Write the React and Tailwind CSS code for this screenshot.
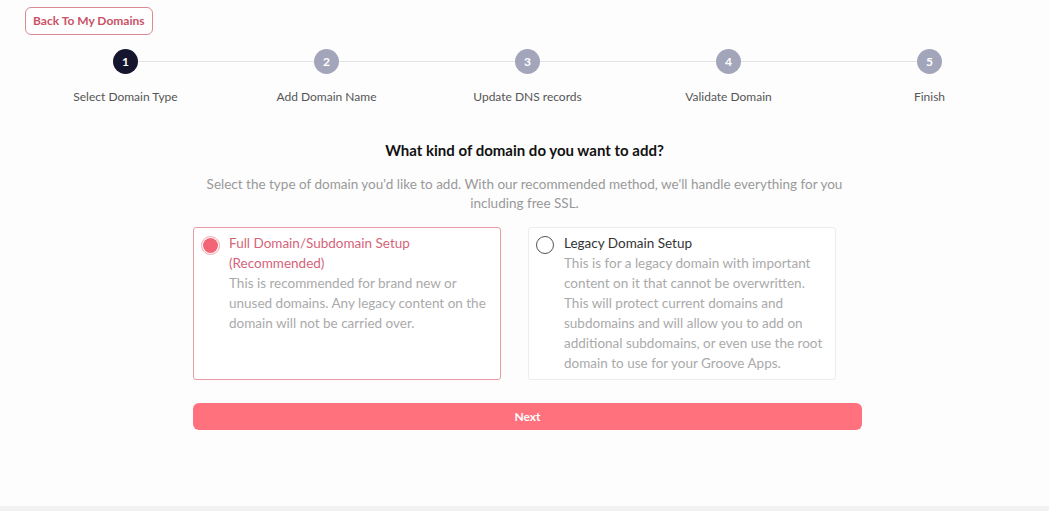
export default function App() {
  const steps = ["Select Domain Type", "Add Domain Name", "Update DNS records", "Validate Domain", "Finish"];
  return (
    <div className="w-[1049px] h-[511px] bg-[#fdfdfd] flex flex-col overflow-hidden" style={{ fontFamily: "Lato, 'Noto Sans', sans-serif" }}>
      <div className="flex-1 flex flex-col">
        <div className="pl-[25px] pt-[7px]">
          <button className="h-[28px] px-[7px] border border-[#d98a93] rounded-[6px] text-[12px] font-bold text-[#c95267] bg-white">
            Back To My Domains
          </button>
        </div>
        <div className="ml-[25px] w-[1005px] mt-[14px] grid grid-cols-5">
          {steps.map((s, i) => (
            <div key={s} className="flex flex-col items-center relative">
              {i < 4 && <div className="absolute top-[12px] left-1/2 w-full h-px bg-[#e3e3e6]" />}
              <div className={`relative z-10 w-[25px] h-[25px] rounded-full flex items-center justify-center text-[12px] font-bold text-white ${i === 0 ? "bg-[#15152e]" : "bg-[#a3a6ba]"}`}>
                {i + 1}
              </div>
              <div className="mt-[16px] text-[12px] text-[#555] leading-[14px]">{s}</div>
            </div>
          ))}
        </div>
        <div className="mt-[36px] text-center text-[15px] font-bold text-[#111] leading-[20px]">What kind of domain do you want to add?</div>
        <div className="mt-[15px] mx-auto w-[650px] text-center text-[13.5px] text-[#999] leading-[19px]">
          Select the type of domain you'd like to add. With our recommended method, we'll handle everything for you including free SSL.
        </div>
        <div className="ml-[193px] w-[669px] mt-[14px]">
          <div className="flex gap-[27px]">
            <div className="w-[308px] h-[153px] border border-[#e99aa3] rounded-[3px] bg-white flex pt-[5px] pl-[7px] pr-[10px]">
              <div className="w-[19px] h-[19px] rounded-full border border-[#f4a9b1] flex items-center justify-center mt-[3px] shrink-0">
                <div className="w-[15px] h-[15px] rounded-full bg-[#f16577]" />
              </div>
              <div className="ml-[9px] text-[13.5px] leading-[20px]">
                <div className="text-[#d4647a]">Full Domain/Subdomain Setup (Recommended)</div>
                <div className="text-[#aaa] pr-[4px]">This is recommended for brand new or unused domains. Any legacy content on the domain will not be carried over.</div>
              </div>
            </div>
            <div className="w-[308px] h-[153px] border border-[#ececec] rounded-[3px] bg-white flex pt-[5px] pl-[7px] pr-[10px]">
              <div className="w-[18px] h-[18px] rounded-full border-[1.5px] border-[#555] mt-[3px] shrink-0" />
              <div className="ml-[10px] text-[13.5px] leading-[20px]">
                <div className="text-[#333]">Legacy Domain Setup</div>
                <div className="text-[#aaa]">This is for a legacy domain with important content on it that cannot be overwritten. This will protect current domains and subdomains and will allow you to add on additional subdomains, or even use the root domain to use for your Groove Apps.</div>
              </div>
            </div>
          </div>
          <button className="mt-[23px] w-full h-[27px] rounded-[6px] bg-[#ff717d] text-white text-[12px] font-bold">Next</button>
        </div>
      </div>
      <div className="h-[5px] bg-[#f2f2f2]" />
    </div>
  );
}
